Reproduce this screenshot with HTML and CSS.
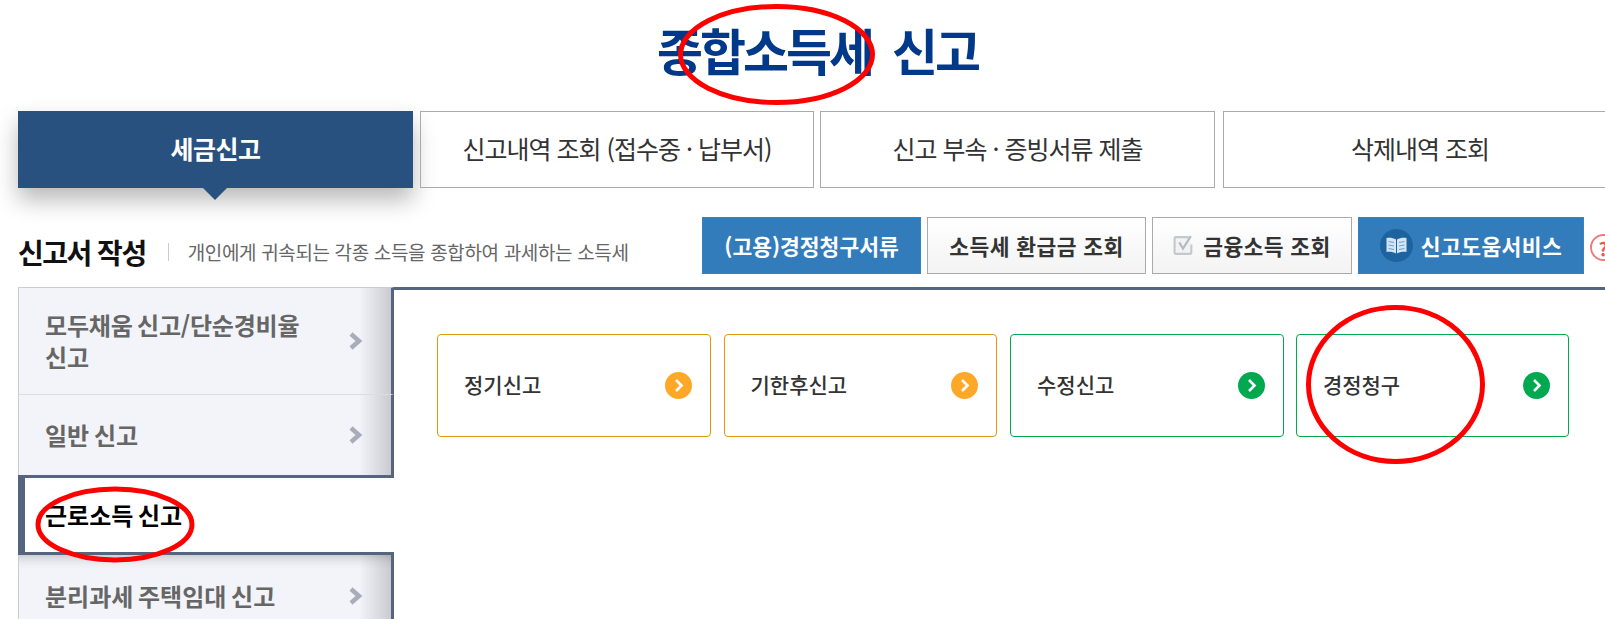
FILE: index.html
```html
<!DOCTYPE html>
<html lang="ko">
<head>
  <meta charset="UTF-8">
  <title>종합소득세 신고</title>
  <link rel="stylesheet" href="styles.css">
</head>
<body>
  <div class="wrap">
    <h1 class="title">종합소득세&nbsp; 신고</h1>

    <div class="tabs">
      <a class="tab on">세금신고</a>
      <a class="tab">신고내역 조회 (접수중 · 납부서)</a>
      <a class="tab">신고 부속 · 증빙서류 제출</a>
      <a class="tab">삭제내역 조회</a>
    </div>

    <div class="head">
      <div class="head-left">
        <h2>신고서 작성</h2>
        <span class="sep"></span>
        <p>개인에게 귀속되는 각종 소득을 종합하여 과세하는 소득세</p>
      </div>
      <div class="head-btns">
        <a class="btn blue b1">(고용)경정청구서류</a>
        <a class="btn b2">소득세 환급금 조회</a>
        <a class="btn b3">
          <svg class="ico-check" width="22" height="21" viewBox="0 0 21 20">
            <path d="M15 2H2.5a1 1 0 0 0-1 1v14a1 1 0 0 0 1 1h14a1 1 0 0 0 1-1V9" fill="#f2f2f2" stroke="#c4c8cc" stroke-width="2"/>
            <path d="M6 7l3.500 6L17 1" fill="none" stroke="#b5bac0" stroke-width="2"/>
          </svg>
          금융소득 조회
        </a>
        <a class="btn blue b4">
          <svg class="ico-book" width="33" height="33" viewBox="0 0 33 33">
            <circle cx="16.500" cy="16.500" r="16.500" fill="#1c63a0"/>
            <path d="M16 10.500c-2.500-1.500-6-2-9.500-1.500v14c3.500-.5 7 0 9.500 1.500zM17 10.500c2.500-1.500 6-2 9.500-1.500v14c-3.500-.5-7 0-9.500 1.500z" fill="#d5e5f2"/>
            <path d="M8.500 12.500l5.500 1M8.500 16l5.500 1M8.500 19.500l5.500 1M24.500 12.500l-5.500 1M24.500 16l-5.500 1M24.500 19.500l-5.500 1" stroke="#6ba3d0" stroke-width="1.200"/>
          </svg>
          신고도움서비스
        </a>
        <span class="help">?</span>
      </div>
    </div>

    <div class="board">
      <ul class="side">
        <li class="side-item first">
          <span>모두채움 신고/단순경비율<br>신고</span>
          <svg class="arr" width="15" height="18" viewBox="0 0 15 18"><path d="M3 2l8 7-8 7" fill="none" stroke="#a9adbb" stroke-width="4.500"/></svg>
        </li>
        <li class="side-item">
          <span>일반 신고</span>
          <svg class="arr" width="15" height="18" viewBox="0 0 15 18"><path d="M3 2l8 7-8 7" fill="none" stroke="#a9adbb" stroke-width="4.500"/></svg>
        </li>
        <li class="side-item on">
          <span>근로소득 신고</span>
        </li>
        <li class="side-item after-on">
          <span>분리과세 주택임대 신고</span>
          <svg class="arr" width="15" height="18" viewBox="0 0 15 18"><path d="M3 2l8 7-8 7" fill="none" stroke="#a9adbb" stroke-width="4.500"/></svg>
        </li>
      </ul>

      <div class="panel">
        <a class="card orange">
          <span>정기신고</span>
          <svg width="27" height="27" viewBox="0 0 27 27"><circle cx="13.500" cy="13.500" r="13.500" fill="#ffa827"/><path d="M11 8l5.500 5.500L11 19" fill="none" stroke="#fff" stroke-width="2.600"/></svg>
        </a>
        <a class="card orange">
          <span>기한후신고</span>
          <svg width="27" height="27" viewBox="0 0 27 27"><circle cx="13.500" cy="13.500" r="13.500" fill="#ffa827"/><path d="M11 8l5.500 5.500L11 19" fill="none" stroke="#fff" stroke-width="2.600"/></svg>
        </a>
        <a class="card green">
          <span>수정신고</span>
          <svg width="27" height="27" viewBox="0 0 27 27"><circle cx="13.500" cy="13.500" r="13.500" fill="#00a94f"/><path d="M11 8l5.500 5.500L11 19" fill="none" stroke="#fff" stroke-width="2.600"/></svg>
        </a>
        <a class="card green">
          <span>경정청구</span>
          <svg width="27" height="27" viewBox="0 0 27 27"><circle cx="13.500" cy="13.500" r="13.500" fill="#00a94f"/><path d="M11 8l5.500 5.500L11 19" fill="none" stroke="#fff" stroke-width="2.600"/></svg>
        </a>
      </div>
    </div>
  </div>

  <!-- red marks drawn over the screen -->
  <svg class="marks" width="1605" height="619" viewBox="0 0 1605 619">
    <ellipse cx="776.500" cy="54.500" rx="96" ry="48" />
    <ellipse cx="1395.500" cy="384.500" rx="87" ry="77" />
    <ellipse cx="115" cy="524.500" rx="77" ry="35.500" />
  </svg>
</body>
</html>
```

FILE: styles.css
```css
* {
  box-sizing: border-box;
}
html, body {
  margin: 0;
  padding: 0;
  height: 619px;
  overflow: hidden;
  background: #fff;
}
body {
  position: relative;
  font-family: "Noto Sans CJK KR", "Noto Sans", sans-serif;
  color: #333;
}
.wrap {
  width: 1635px;
  padding: 0 18px;
}
.title {
  margin: 0;
  height: 111px;
  padding-top: 17px;
  text-align: center;
  font-size: 50px;
  line-height: 65px;
  font-weight: 700;
  letter-spacing: -3px;
  word-spacing: -1px;
  color: #00388a;
}
.tabs {
  display: flex;
  height: 77px;
}
.tab {
  position: relative;
  flex: 0 0 394px;
  display: flex;
  align-items: center;
  justify-content: center;
  padding-bottom: 3px;
  border: 1px solid #aaa;
  font-size: 25px;
  letter-spacing: -1px;
  color: #333;
}
.tab:nth-child(2) {
  margin-left: 7px;
}
.tab:nth-child(3) {
  flex-basis: 395px;
  margin-left: 6px;
}
.tab:nth-child(4) {
  margin-left: 8px;
}
.tab.on {
  flex-basis: 395px;
  border: 0;
  background: #28517f;
  color: #fff;
  font-weight: 700;
  letter-spacing: -0.500px;
  box-shadow: 0 12px 22px rgba(0,0,0,0.28);
}
.tab.on:after {
  content: "";
  position: absolute;
  left: 185px;
  top: 77px;
  border-top: 12px solid #28517f;
  border-left: 12px solid transparent;
  border-right: 12px solid transparent;
}
.head {
  display: flex;
  align-items: center;
  justify-content: space-between;
  height: 57px;
  margin: 29px 0 13px;
}
.head-left {
  display: flex;
  align-items: center;
  margin-top: 12px;
}
.head-left h2 {
  margin: 0;
  font-size: 28px;
  line-height: 34px;
  font-weight: 700;
  letter-spacing: -1.500px;
  color: #111;
}
.sep {
  width: 1px;
  height: 18px;
  margin: 0 19px 0 22px;
  background: #ccc;
}
.head-left p {
  margin: 0;
  font-size: 19px;
  letter-spacing: -0.350px;
  color: #666;
}
.head-btns {
  display: flex;
  align-items: flex-start;
  gap: 6px;
  height: 57px;
}
.btn {
  display: flex;
  align-items: center;
  justify-content: center;
  height: 57px;
  font-size: 21.500px;
  font-weight: 700;
  letter-spacing: 0.400px;
  border: 1px solid #aaa;
  background: linear-gradient(#fff, #f3f3f3);
  color: #333;
}
.btn.blue {
  border-color: #3384c8;
  background: #337cbc;
  color: #fff;
}
.b1 { width: 219px; letter-spacing: 0; }
.b2 { width: 219px; }
.b3 { width: 200px; gap: 8px; }
.b4 { width: 226px; gap: 8px; }
.help {
  width: 27px;
  height: 27px;
  margin-top: 17px;
  border: 2px solid #ec7b7b;
  border-radius: 50%;
  text-align: center;
  font-size: 19px;
  line-height: 23px;
  font-weight: 700;
  color: #e25a5a;
}
.board {
  display: flex;
  align-items: flex-start;
}
.side {
  flex: 0 0 376px;
  margin: 0;
  padding: 0;
  list-style: none;
}
.side-item {
  display: flex;
  align-items: center;
  justify-content: space-between;
  padding: 0 28px 0 26px;
  height: 80px;
  font-size: 24px;
  line-height: 32px;
  font-weight: 700;
  word-spacing: -2px;
  color: #666;
  background: linear-gradient(to right, rgba(0,0,0,0) 340px, rgba(0,0,0,0.17) 372px) #f2f4fa;
  border-left: 1px solid #ccc;
  border-right: 3px solid #556580;
}
.side-item.first {
  height: 108px;
  border-top: 1px solid #ccc;
  border-bottom: 1px solid #ddd;
  letter-spacing: -0.200px;
}
.side-item.on {
  height: 80px;
  padding-left: 20px;
  background: #fff;
  border: 3px solid #556580;
  border-left-width: 7px;
  border-right: 0;
  color: #000;
}
.side-item.after-on {
  position: relative;
  height: 81px;
  box-shadow: inset 0 14px 14px -14px rgba(0,0,0,0.3);
}
.panel {
  flex: 1;
  display: flex;
  gap: 13px;
  height: 332px;
  padding: 44px 0 0 43px;
  border-top: 3px solid #556580;
}
.card {
  flex: 0 0 273.500px;
  height: 103px;
  display: flex;
  align-items: center;
  justify-content: space-between;
  padding: 0 18px 0 26px;
  border: 1px solid #d99a0c;
  border-radius: 4px;
  font-size: 21px;
  font-weight: 500;
  color: #333;
}
.card:last-child {
  margin-left: -0.600px;
}
.card span {
  padding-bottom: 4px;
}
.card.green {
  border-color: #00a94f;
}
.marks {
  position: absolute;
  left: 0;
  top: 0;
  pointer-events: none;
}
.marks ellipse {
  fill: none;
  stroke: #f00;
  stroke-width: 5;
}
```
